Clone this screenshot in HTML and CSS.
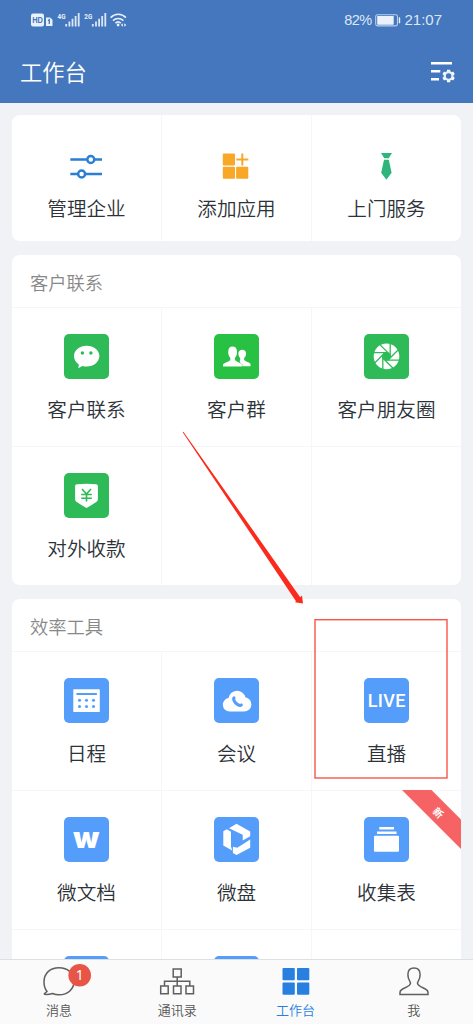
FILE: index.html
```html
<!DOCTYPE html>
<html lang="zh-CN">
<head>
<meta charset="utf-8">
<title>工作台</title>
<link rel="stylesheet" href="styles.css">
</head>
<body>
<div class="app">
  <header class="header">
    <div class="status">
      <svg class="signals" width="98" height="18" viewBox="30 11 98 18">
        <rect x="31" y="13.5" width="13" height="13" rx="2"/>
        <text class="hd" x="32.2" y="23.3" textLength="10.8" lengthAdjust="spacingAndGlyphs">HD</text>
        <path d="M46 17.5h4l2.5 2.3V26H46z"/>
        <path class="cut" d="M48 20.5l1.3-.8V24"/>
        <text class="net" x="57.5" y="18.9" textLength="8" lengthAdjust="spacingAndGlyphs">4G</text>
        <text class="net" x="84.3" y="18.9" textLength="8" lengthAdjust="spacingAndGlyphs">2G</text>
        <path class="bars" d="M66.2 26.5V24M69.4 26.5V21.5M72.5 26.5V18.7M75.6 26.5V16M78.7 26.5V13"/>
        <path class="bars" d="M92.8 26.5V24M96 26.5V21.5M99.1 26.5V18.7M102.2 26.5V16M105.3 26.5V13"/>
        <path class="wave" d="M110.6 17.6c4.3-4.4 11-4.4 15.3 0M113 20.6c3-2.9 7.4-2.9 10.4 0M115.4 23.2c1.7-1.6 3.7-1.6 5.4 0"/>
        <circle cx="118.1" cy="25" r="1.4"/>
        <path d="M120.8 25l2-1.8v3.6zM126.3 25l-2-1.8v3.6z"/>
      </svg>
      <div class="power">
        <span class="percent">82%</span>
        <svg width="26" height="13" viewBox="0 0 26 13"><rect x=".7" y=".7" width="21.8" height="11.2" rx="1.8" fill="none" stroke="#b9cfee" stroke-width="1.1"/><rect x="2.2" y="2" width="16.5" height="8.7" rx=".6"/><rect x="23.8" y="3.3" width="1.4" height="6" rx=".6"/></svg>
        <span class="clock">21:07</span>
      </div>
    </div>
    <div class="titlebar">
      <h1 class="title">工作台</h1>
      <svg width="25" height="22" viewBox="430 60.5 25 22">
        <path d="M431 62.8h21M431 70.8h9.3M431 78.7h8" fill="none" stroke="#fff" stroke-width="2.6"/>
        <path d="M448.6 69.3v12.4M443.200 72.400l10.800 6.200M443.200 78.600l10.800-6.200" stroke="#fff" stroke-width="3.200"/>
        <circle cx="448.6" cy="75.5" r="5"/><circle cx="448.6" cy="75.5" r="2.7" fill="#4477bd"/>
      </svg>
    </div>
  </header>

  <main class="content">
    <section class="card quick">
      <div class="grid">
        <div class="cell">
          <svg class="mark" width="34" height="28" viewBox="70 152 34 28"><g fill="none" stroke="#2b7fd3" stroke-width="2.5"><path d="M70.3 159.5h16.5M95 159.5h7M70.3 174h7.4M86 174h16"/><circle cx="90.8" cy="159.5" r="3.5"/><circle cx="81.6" cy="174" r="3.5"/></g></svg>
          <span class="label">管理企业</span>
        </div>
        <div class="cell">
          <svg class="mark" width="34" height="28" viewBox="220 152 34 28"><g fill="#f8a727"><rect x="222.8" y="153.5" width="12.2" height="12" rx="1"/><rect x="222.8" y="166.8" width="12.2" height="12" rx="1"/><rect x="236.1" y="166.8" width="12.2" height="12" rx="1"/></g><path d="M236.3 159.5h12M242.3 153.5v12" stroke="#f8a727" stroke-width="2"/></svg>
          <span class="label">添加应用</span>
        </div>
        <div class="cell">
          <svg class="mark" width="34" height="28" viewBox="370 152 34 28"><path d="M381 153h11l-3.3 5.2h-4.4zM384 159.8h4.8l2.8 13-5.2 7-5.2-7z" fill="#2db57b"/></svg>
          <span class="label">上门服务</span>
        </div>
      </div>
    </section>

    <section class="card">
      <h2 class="heading">客户联系</h2>
      <div class="grid">
        <div class="cell">
          <svg class="tile green" viewBox="0 0 45 45"><path d="M22.7 11.7c7.1 0 12.7 4.6 12.7 10.4s-5.6 10.5-12.7 10.5c-1.6 0-3-.2-4.4-.6l-4 2.2.5-3.6c-3-2-4.8-5-4.8-8.5 0-5.800 5.600-10.400 12.700-10.400z"/><circle class="hole" cx="18.400" cy="19" r="1.700"/><circle class="hole" cx="26.900" cy="19" r="1.700"/></svg>
          <span class="label">客户联系</span>
        </div>
        <div class="cell">
          <svg class="tile lime" viewBox="0 0 45 45"><path d="M27 32.300H36.500v-2.100c0-1.500-3.900-2-5.700-3.600-1.300-1-.8-2.500.2-3.500 1-1.300 1-2.500 1-3.800 0-2.200-1.500-3.500-3.700-3.500s-3.900 1.300-3.900 3.500c0 1.500.2 2.800 1.300 4.200.7 1 .8 2.300 0 3.300z"/><path class="rim" d="M9 32.600v-1.800c0-1.600 4.600-2.400 6.600-4 1.500-1.200.8-2.800-.1-4-1-1.500-1.300-3-1.300-4.900 0-3.500 1.700-5.300 4.400-5.300s4.400 1.800 4.400 5.300c0 1.900-.3 3.400-1.300 4.900-.9 1.200-1.500 2.800 0 4 2 1.600 6.100 2.400 6.100 4v1.800z"/></svg>
          <span class="label">客户群</span>
        </div>
        <div class="cell">
          <svg class="tile green" viewBox="0 0 45 45"><circle cx="22.500" cy="22.400" r="12.800"/><g transform="translate(22.500 22.400)" fill="none" stroke="#2dba57" stroke-width="1.300"><path d="M3.700-13V1.500"/><path d="M3.700-13V1.500" transform="rotate(45)"/><path d="M3.700-13V1.500" transform="rotate(90)"/><path d="M3.700-13V1.500" transform="rotate(135)"/><path d="M3.700-13V1.500" transform="rotate(180)"/><path d="M3.700-13V1.500" transform="rotate(225)"/><path d="M3.700-13V1.500" transform="rotate(270)"/><path d="M3.700-13V1.500" transform="rotate(315)"/><circle class="hole" r="3.400"/></g></svg>
          <span class="label">客户朋友圈</span>
        </div>
        <div class="cell">
          <svg class="tile green" viewBox="0 0 45 45"><path d="M13 11.300c6-.7 13-.7 19 0 1.300.1 1.900.8 1.900 2v12.500c0 1.500-.5 2.500-1.700 3.300-3 2.200-6 4-9.700 5.900-3.700-1.900-6.700-3.700-9.700-5.900-1.200-.8-1.700-1.800-1.700-3.300V13.300c0-1.200.6-1.900 1.900-2z"/><path d="M18 16l4.500 5 4.500-5M17.200 21.500h10.600M17.200 25.200h10.600M22.500 21v7.500" fill="none" stroke="#2dba57" stroke-width="1.600"/></svg>
          <span class="label">对外收款</span>
        </div>
        <div class="cell"></div>
        <div class="cell"></div>
      </div>
    </section>

    <section class="card">
      <h2 class="heading">效率工具</h2>
      <div class="grid">
        <div class="cell">
          <svg class="tile blue" viewBox="0 0 45 45"><rect x="9.300" y="11.300" width="26.500" height="22.700" rx=".6"/><path d="M12.400 16h20.500" stroke="#559dfb" stroke-width="1.900"/><g class="hole"><circle cx="15.500" cy="22.300" r="1.500"/><circle cx="22.500" cy="22.300" r="1.500"/><circle cx="29.500" cy="22.300" r="1.500"/><circle cx="15.500" cy="28.500" r="1.500"/><circle cx="22.500" cy="28.500" r="1.500"/><circle cx="29.500" cy="28.500" r="1.500"/></g></svg>
          <span class="label">日程</span>
        </div>
        <div class="cell">
          <svg class="tile blue" viewBox="0 0 45 45"><path d="M15.500 33.600a6.800 6.800 0 0 1-1-13.500 8.600 8.600 0 0 1 16.900-.8 7.200 7.200 0 0 1-1.400 14.300z"/><path class="hole" d="M19 18.700c.9-.9 1.900-.6 2.300.4.500 1.400-.4 2 .1 3 .8 1.500 2 2.700 3.500 3.500 1 .5 1.700-.5 3 0 1.100.5 1.300 1.600.5 2.400-1.300 1.500-3.500 1.300-5.800-.3-1.900-1.300-3.300-3-4.100-5-.6-1.600-.5-3 .5-4z"/></svg>
          <span class="label">会议</span>
        </div>
        <div class="cell">
          <svg class="tile blue" viewBox="0 0 45 45"><text class="live" x="3.800" y="28.700" textLength="37.500">LIVE</text></svg>
          <span class="label">直播</span>
        </div>
        <div class="cell">
          <svg class="tile blue" viewBox="0 0 45 45"><text class="doc" x="9.300" y="31" textLength="26" lengthAdjust="spacingAndGlyphs">w</text></svg>
          <span class="label">微文档</span>
        </div>
        <div class="cell">
          <svg class="tile blue" viewBox="0 0 45 45"><path d="M12.800 12.300l4.200 2.500v14.700l1.200 3.900-8.900-4.900V14.300zM15 11.300l7.500-4.600 13.700 7.800v4.700l-7.500 4.300v-5.700zM36.200 22.500v8.300L22.500 38l-3.600-2.100v-6.200l4.400 1.100z"/></svg>
          <span class="label">微盘</span>
        </div>
        <div class="cell">
          <svg class="tile blue" viewBox="0 0 45 45"><rect x="10" y="18.700" width="25" height="16" rx="1"/><path d="M13 15.700h19.500M15.300 11.200H30" stroke="#fff" stroke-width="2.600"/></svg>
          <span class="label">收集表</span>
          <svg class="ribbon" width="59" height="59" viewBox="0 0 59 59"><path d="M0 0h29.500L59 29.500V59z" fill="#f66364"/><text x="36" y="26.500" text-anchor="middle" transform="rotate(45 36 23)">新</text></svg>
        </div>
        <div class="cell"><svg class="tile blue" viewBox="0 0 45 45"></svg></div>
        <div class="cell"><svg class="tile blue" viewBox="0 0 45 45"></svg></div>
        <div class="cell"></div>
      </div>
    </section>
    <svg class="annotation" width="473" height="600" viewBox="0 400 473 600">
      <path d="M182.700 432.200L296 601.300 294.800 602.200 303 603.500 302 595.500 300.200 597.200 183.400 431.800z" fill="#fc2a1c"/>
      <rect x="315" y="619.700" width="132" height="158.300" fill="none" stroke="#fa5449" stroke-width="1.400"/>
    </svg>
  </main>

  <nav class="tabbar">
    <div class="tab">
      <svg width="66" height="34" viewBox="26 964 66 34"><path d="M47 991.500c-2-2.500-3-5.500-3-9.500 0-8.500 6-14.300 15-14.300s15 5.800 15 13.600S68 994.800 59 994.800c-2.300 0-4.600-.5-6.500-1.300-2.700.8-5.500 1-7.800.8-.5 0-.5-.4-.1-.8z" fill="none" stroke="#5f5f5f" stroke-width="1.500"/><circle cx="79.700" cy="975.300" r="11.300" fill="#e65545"/><text class="count" x="79.700" y="980.300" text-anchor="middle">1</text></svg>
      <span>消息</span>
    </div>
    <div class="tab">
      <svg width="60" height="34" viewBox="147 964 60 34"><g fill="none" stroke="#5f5f5f" stroke-width="1.500"><path d="M173.200 969h8v8h-8zM160.700 986h7.500v7.800h-7.500zM173.500 986h7.500v7.800h-7.500zM186 986h7.500v7.800H186zM177.200 977v9M164.500 986v-4.700h25.300v4.700"/></g></svg>
      <span>通讯录</span>
    </div>
    <div class="tab active">
      <svg width="60" height="34" viewBox="265.500 964 60 34"><g fill="#277fe0"><rect x="282" y="968" width="12.300" height="12.300" rx="1"/><rect x="296.500" y="968" width="12.300" height="12.300" rx="1"/><rect x="282" y="982.400" width="12.300" height="12.300" rx="1"/><rect x="296.500" y="982.400" width="12.300" height="12.300" rx="1"/></g></svg>
      <span>工作台</span>
    </div>
    <div class="tab">
      <svg width="60" height="34" viewBox="383.700 964 60 34"><path d="M399.700 994.500v-2.300c0-2.800 4-3.800 7.300-5.500 3.200-1.600 4-3.400 2.300-5.900-1.300-1.900-1.700-4-1.700-6.300 0-4 2.300-6.500 6.100-6.500s6.100 2.500 6.100 6.500c0 2.300-.4 4.400-1.700 6.300-1.700 2.500-.9 4.300 2.300 5.900 3.300 1.700 7.300 2.700 7.300 5.500v2.300z" fill="none" stroke="#5f5f5f" stroke-width="1.500"/></svg>
      <span>我</span>
    </div>
  </nav>
</div>
</body>
</html>
```

FILE: styles.css
```css
* { box-sizing: border-box; }

body {
  margin: 0;
  font-family: "Noto Sans CJK SC", sans-serif;
  font-weight: 350;
  background: #f0f2f5;
}

.app {
  display: flex;
  flex-direction: column;
  width: 473px;
  height: 1024px;
  overflow: hidden;
}

.header {
  flex: none;
  height: 102.500px;
  color: #fff;
  background: #4477bd;
}

.header svg { fill: #eaf1fa; display: block; }

.status {
  display: flex;
  justify-content: space-between;
  align-items: center;
  height: 40px;
  padding: 0 31px 0 30px;
}

.signals .hd { font: 700 9px "Liberation Sans", sans-serif; fill: #4477bd; }
.signals .net { font: 700 8px Roboto, sans-serif; }
.signals .cut { fill: none; stroke: #4477bd; stroke-width: 1.300; }
.signals .bars { stroke: #dce7f6; stroke-width: 1.800; }
.signals .wave { fill: none; stroke: #eaf1fa; stroke-width: 1.600; }

.power {
  display: flex;
  align-items: center;
  gap: 3.500px;
  font: 400 15px/20px "Liberation Sans", sans-serif;
  color: #dce7f6;
}

.percent { font-size: 14.500px; letter-spacing: -0.600px; }

.titlebar {
  display: flex;
  justify-content: space-between;
  align-items: center;
  height: 63px;
  padding: 0 18px 0 20px;
}

.title {
  margin: -1px 0 0;
  font-size: 22.300px;
  font-weight: 350;
  line-height: 30px;
}

.content {
  position: relative;
  flex: 1;
  min-height: 0;
  display: flex;
  flex-direction: column;
  gap: 13.700px;
  padding: 12.500px 12px 0;
  overflow: hidden;
}

.card {
  flex: none;
  overflow: hidden;
  border-radius: 8px;
  background: #fff;
}

.heading {
  height: 52px;
  margin: 0;
  padding: 0 18px;
  font-size: 18.300px;
  font-weight: 350;
  line-height: 54px;
  color: #888;
}

.grid {
  display: grid;
  grid-template-columns: 150px 150px 149px;
  grid-auto-rows: 139.200px;
}

.quick .grid { grid-auto-rows: 126.300px; }

.cell {
  position: relative;
  display: flex;
  flex-direction: column;
  align-items: center;
  padding-top: 25.800px;
  border-top: 1px solid #f6f6f7;
  border-right: 1px solid #f6f6f7;
}

.cell:nth-child(3n) { border-right: 0; }

.quick .cell { padding-top: 37px; border-top: 0; }

.tile {
  width: 45px;
  height: 45px;
  border-radius: 5px;
  fill: #fff;
}

.green { background: #2dba57; }
.green .hole { fill: #2dba57; }
.lime { background: #29c143; }
.rim { stroke: #29c143; stroke-width: 1; paint-order: stroke; }
.blue { background: #559dfb; }
.blue .hole { fill: #559dfb; }

.label {
  margin-top: 15px;
  font-size: 19.600px;
  line-height: 30px;
  color: #2c3238;
  white-space: nowrap;
}

.quick .label { margin-top: 13px; }

.mark { margin-left: -2px; margin-right: -2px; }

.live { font: 500 18px Roboto, sans-serif; }
.doc { font: 900 28px Inter, sans-serif; }

.ribbon {
  position: absolute;
  top: -1px;
  right: 0;
}

.ribbon text { font-size: 10px; font-weight: 700; fill: #fff; }

.annotation {
  position: absolute;
  left: 0;
  top: 297.500px;
}

.tabbar {
  flex: none;
  display: grid;
  grid-template-columns: repeat(4, 1fr);
  height: 65.500px;
  border-top: 1px solid #dcdfe3;
  background: #fafafa;
}

.tab {
  display: flex;
  flex-direction: column;
  align-items: center;
  padding-top: 4.500px;
  font-size: 13px;
  line-height: 20px;
  color: #555;
}

.tab span { margin-top: 2px; }
.tab.active { color: #277fe0; }
.count { font: 400 14px "Noto Sans", sans-serif; fill: #fff; }
```
